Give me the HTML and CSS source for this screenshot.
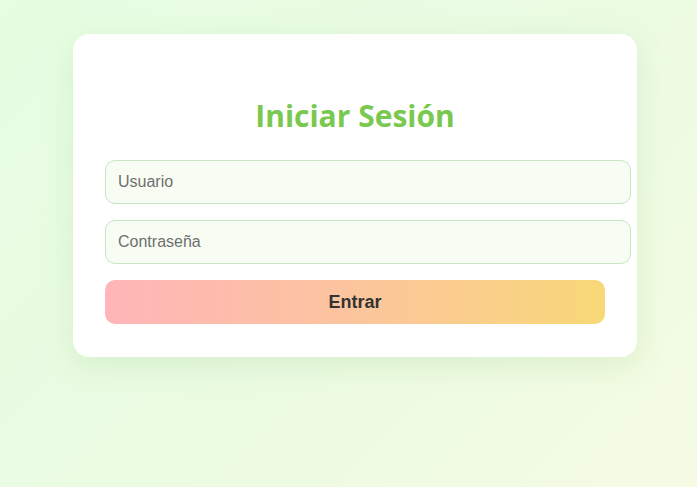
FILE: index.html
```html
<!DOCTYPE html>
<html lang="es">
<head>
<meta charset="utf-8">
<title>Iniciar Sesión</title>
<link rel="stylesheet" href="styles.css">
</head>
<body>
<main class="page">
  <form class="card">
    <h2 class="title">Iniciar Sesión</h2>
    <input class="field" type="text" placeholder="Usuario">
    <input class="field" type="password" placeholder="Contraseña">
    <button class="btn" type="button">Entrar</button>
  </form>
</main>
</body>
</html>
```
FILE: styles.css
```css
html, body {
  margin: 0;
  height: 100%;
}
body {
  background: linear-gradient(135deg, #e6fde2 0%, #eafbe2 50%, #f5fbe3 100%);
  font-family: "Liberation Sans", Arial, sans-serif;
}
.page {
  padding: 34px 0 0 73px;
}
.card {
  width: 500px;
  padding: 32px 32px 33px;
  background: #ffffff;
  border-radius: 16px;
  box-shadow: 0 8px 30px rgba(110, 180, 90, 0.16);
  display: flex;
  flex-direction: column;
  align-items: flex-start;
}
.title {
  align-self: stretch;
  margin: 29px 0 23px;
  height: 42px;
  line-height: 42px;
  text-align: center;
  font-family: "Open Sans", "Noto Sans", sans-serif;
  font-weight: 700;
  font-size: 30px;
  color: #79c84f;
}
.field {
  width: 500px;
  padding: 12px;
  margin: 0 0 16px;
  border: 1px solid #c5e6c5;
  border-radius: 10px;
  background: #f8fdf4;
  font-family: "Liberation Sans", Arial, sans-serif;
  font-size: 16px;
  line-height: 18px;
  color: #333;
  outline: none;
}
.field::placeholder {
  color: #6f6f6f;
}
.btn {
  width: 500px;
  height: 44px;
  border: 0;
  border-radius: 10px;
  background: linear-gradient(90deg, #ffb5b9 0%, #fcc3a0 45%, #f8d877 100%);
  font-family: "Liberation Sans", Arial, sans-serif;
  font-weight: 700;
  font-size: 18px;
  color: #333333;
  cursor: pointer;
}
```
